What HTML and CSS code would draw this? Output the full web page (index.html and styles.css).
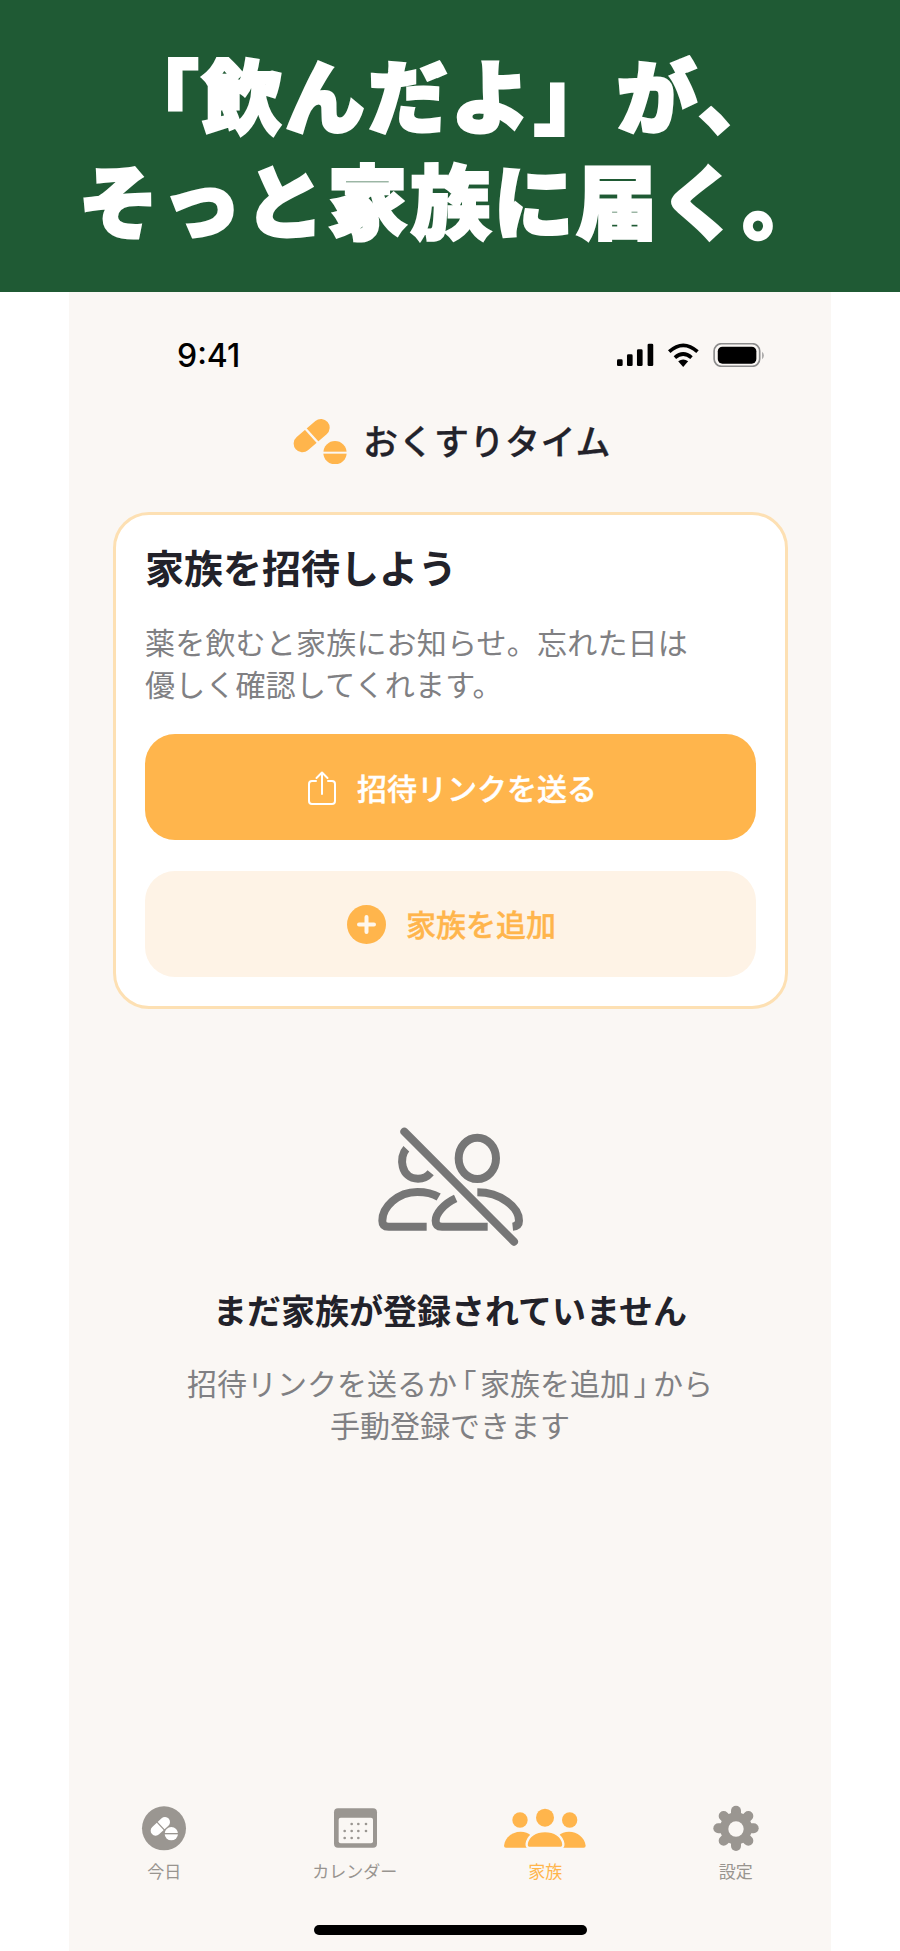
FILE: index.html
```html
<!DOCTYPE html>
<html lang="ja">

<head>
    <title>おくすりタイム</title>
    <link rel="stylesheet" href="styles.css">
</head>

<body>
    <header class="banner">
        <p class="banner-line">「飲んだよ」が、</p>
        <p class="banner-line banner-line-second">そっと家族に届く。</p>
    </header>

    <main class="phone">
        <div class="status-bar">
            <span class="status-time">9:41</span>
            <svg class="status-icons" viewBox="48 36 445 72">
                <rect x="48" y="85" width="17" height="20" rx="4" fill="#000" />
                <rect x="78" y="70" width="17" height="35" rx="4" fill="#000" />
                <rect x="108" y="55" width="17" height="50" rx="4" fill="#000" />
                <rect x="140" y="38" width="17" height="67" rx="4" fill="#000" />
                <path d="M205 62 Q247 24 290 62" fill="none" stroke="#000" stroke-width="11" />
                <path d="M222 80 Q247 58 272 80" fill="none" stroke="#000" stroke-width="11" />
                <path d="M232 91 Q247 80 262 91 L247 108 Z" fill="#000" />
                <rect x="340" y="38" width="137" height="68" rx="22" fill="none" stroke="#8c8c8c" stroke-width="5" />
                <rect x="351" y="47" width="116" height="51" rx="14" fill="#000" />
                <path d="M485 62 Q493 73 485 85 Z" fill="#8c8c8c" />
            </svg>
        </div>

        <div class="app-header">
            <svg class="app-logo" viewBox="38 52 162 138">
                <path d="M66 129 L122 81" fill="none" stroke="#ffb54c" stroke-width="52" stroke-linecap="round" />
                <path d="M68 76 L120 134" fill="none" stroke="#faf7f4" stroke-width="7" />
                <circle cx="164" cy="156" r="35" fill="#ffb54c" />
                <rect x="125" y="153" width="78" height="6" fill="#faf7f4" />
            </svg>
            <h1 class="app-title">おくすりタイム</h1>
        </div>

        <section class="invite-card">
            <h2 class="invite-title">家族を招待しよう</h2>
            <p class="invite-text">薬を飲むと家族にお知らせ。忘れた日は<br>優しく確認してくれます。</p>
            <button class="btn btn-primary">
                <svg class="share-icon" viewBox="0 0 28 34">
                    <path d="M8 10 H4 Q1 10 1 13 V30 Q1 33 4 33 H24 Q27 33 27 30 V13 Q27 10 24 10 H20" fill="none" stroke="#fff" stroke-width="2" stroke-linecap="round" />
                    <path d="M14 23 V1.500 M8.500 7 L14 1.500 L19.500 7" fill="none" stroke="#fff" stroke-width="2" stroke-linecap="round" stroke-linejoin="round" />
                </svg>
                <span class="btn-label">招待リンクを送る</span>
            </button>
            <button class="btn btn-secondary">
                <svg class="plus-icon" viewBox="0 0 39 39">
                    <circle cx="19.500" cy="19.500" r="19.500" fill="#ffb54c" />
                    <path d="M12 19.500 H27 M19.500 12 V27" fill="none" stroke="#fff7ec" stroke-width="4" stroke-linecap="round" />
                </svg>
                <span class="btn-label">家族を追加</span>
            </button>
        </section>

        <section class="empty-state">
            <svg class="empty-icon" viewBox="0 0 660 480">
                <g fill="none" stroke="#767676" stroke-width="24">
                    <path d="M193 95 L522 425" stroke-linecap="round" />
                    <ellipse cx="412" cy="175" rx="56" ry="62" />
                    <path d="M199 146 C176 170 182 236 234 236 C250 236 263 229 272 218" />
                    <path d="M296 291 C276 279 254 276 232 276 C172 276 127 322 127 362 Q127 380 146 380 L260 380" />
                    <path d="M347 295 C310 312 287 342 287 362 Q287 380 306 380 L443 380" />
                    <path d="M412 277 C482 277 537 322 537 362 Q537 378 518 380" />
                </g>
            </svg>
            <h3 class="empty-title">まだ家族が登録されていません</h3>
            <p class="empty-text">招待リンクを送るか<span class="bracket">「</span>家族を追加<span class="bracket">」</span>から<br>手動登録できます</p>
        </section>

        <nav class="tab-bar">
            <div class="tab">
                <svg class="tab-icon" viewBox="148 69 270 150">
                    <circle cx="283" cy="145" r="66" fill="#9a9691" />
                    <path d="M258 152 L286 126" fill="none" stroke="#fff" stroke-width="30" stroke-linecap="round" />
                    <path d="M258 122 L288 154" fill="none" stroke="#9a9691" stroke-width="4" />
                    <circle cx="305" cy="161" r="20" fill="#fff" />
                    <rect x="283" y="159" width="44" height="4" fill="#9a9691" />
                </svg>
                <span class="tab-label">今日</span>
            </div>
            <div class="tab">
                <svg class="tab-icon" viewBox="717 69 270 150">
                    <rect x="789" y="85" width="129" height="118" rx="12" fill="#9a9691" />
                    <rect x="803" y="113" width="103" height="77" rx="6" fill="#faf7f4" />
                    <g fill="#9a9691">
                        <circle cx="842" cy="132" r="4" />
                        <circle cx="862" cy="132" r="4" />
                        <circle cx="885" cy="132" r="4" />
                        <circle cx="821" cy="153" r="4" />
                        <circle cx="842" cy="153" r="4" />
                        <circle cx="862" cy="153" r="4" />
                        <circle cx="885" cy="153" r="4" />
                        <circle cx="821" cy="174" r="4" />
                        <circle cx="842" cy="174" r="4" />
                        <circle cx="862" cy="174" r="4" />
                    </g>
                </svg>
                <span class="tab-label">カレンダー</span>
            </div>
            <div class="tab tab-active">
                <svg class="tab-icon" viewBox="93 69 270 150">
                    <g fill="#ffb54c">
                        <circle cx="153" cy="120" r="23" />
                        <circle cx="228" cy="113" r="27" />
                        <circle cx="302" cy="120" r="23" />
                        <path d="M105 197 C108 172 130 155 155 155 C180 155 200 172 200 203 H111 Q105 203 105 197 Z" />
                        <path d="M350 197 C347 172 325 155 300 155 C275 155 255 172 255 203 H344 Q350 203 350 197 Z" />
                    </g>
                    <path d="M173 192 C176 168 200 153 228 153 C256 153 280 168 283 192 Q284 204 272 204 H184 Q172 204 173 192 Z" fill="#ffb54c" stroke="#faf7f4" stroke-width="7" />
                </svg>
                <span class="tab-label">家族</span>
            </div>
            <div class="tab">
                <svg class="tab-icon" viewBox="662 69 270 150">
                    <g stroke="#9a9691" stroke-width="30" stroke-linecap="round">
                        <path d="M797 92 V198" />
                        <path d="M744 145 H850" />
                        <path d="M760 108 L834 182" />
                        <path d="M834 108 L760 182" />
                    </g>
                    <circle cx="797" cy="145" r="48" fill="#9a9691" />
                    <circle cx="797" cy="147" r="23" fill="#faf7f4" />
                </svg>
                <span class="tab-label">設定</span>
            </div>
        </nav>
        <div class="home-bar"></div>
    </main>
</body>

</html>
```

FILE: styles.css
```css
* {
    box-sizing: border-box;
}

body {
    margin: 0;
    height: 1951px;
    display: flex;
    flex-direction: column;
    background-color: #fff;
    font-family: "Noto Sans CJK JP", "Noto Sans", sans-serif;
    color: #22222a;
}

/* Green caption banner */
.banner {
    height: 292px;
    padding-top: 40px;
    background-color: #1f5a34;
    color: #fff;
    text-align: center;
}

.banner-line {
    margin: 0;
    font-size: 80px;
    line-height: 105px;
    letter-spacing: 3px;
    font-weight: 900;
    -webkit-text-stroke: 3px #fff;
    white-space: nowrap;
}

.banner-line-second {
    padding-left: 4px;
}

/* Phone screen */
.phone {
    flex: 1;
    width: 762px;
    margin: 0 auto;
    display: flex;
    flex-direction: column;
    background-color: #faf7f4;
}

.status-bar {
    display: flex;
    justify-content: space-between;
    align-items: center;
    height: 36px;
    margin-top: 45px;
    padding: 0 66px 0 108px;
}

.status-time {
    font-family: "Inter", "Liberation Sans", sans-serif;
    font-size: 32px;
    font-weight: 500;
    color: #000;
}

.status-icons {
    width: 148px;
    height: 24px;
}

.app-header {
    display: flex;
    justify-content: center;
    align-items: center;
    gap: 16px;
    height: 54px;
    margin-top: 41px;
    margin-bottom: 44px;
    padding-left: 4px;
}

.app-logo {
    width: 54px;
    height: 46px;
}

.app-title {
    margin: 0 0 2px;
    font-size: 35px;
    font-weight: 500;
    line-height: 52px;
    letter-spacing: 0.5px;
    -webkit-text-stroke: 0.3px #22222a;
}

.invite-card {
    display: flex;
    flex-direction: column;
    margin: 0 43px 0 44px;
    padding: 29px 29px 29px;
    border: 3px solid #fde0b3;
    border-radius: 36px;
    background-color: #fff;
}

.invite-title {
    margin: 0 0 32px;
    font-size: 39px;
    font-weight: 700;
    line-height: 44px;
}

.invite-text {
    margin: 0 0 30px;
    font-size: 30px;
    line-height: 42px;
    letter-spacing: 0.2px;
    color: #808083;
    white-space: nowrap;
}

.btn {
    display: flex;
    justify-content: center;
    align-items: center;
    height: 106px;
    border: none;
    border-radius: 30px;
    font-family: inherit;
    font-size: 30px;
    font-weight: 500;
    -webkit-text-stroke: 0.4px currentColor;
}

.btn-label {
    margin-bottom: 3px;
}

.btn-primary {
    gap: 21px;
    margin-bottom: 31px;
    padding: 2px 0 0 4px;
    background-color: #ffb54c;
    color: #fff;
}

.btn-secondary {
    gap: 20px;
    padding-left: 8px;
    background-color: #fef3e6;
    color: #ffb54c;
}

.share-icon {
    width: 28px;
    height: 34px;
}

.plus-icon {
    width: 39px;
    height: 39px;
}

.empty-state {
    display: flex;
    flex-direction: column;
    align-items: center;
    margin-top: 91px;
}

.empty-icon {
    width: 220px;
    height: 160px;
    margin-bottom: 28px;
}

.empty-title {
    margin: 0 0 29px;
    font-size: 34px;
    font-weight: 700;
    line-height: 44px;
}

.empty-text {
    margin: 0;
    font-size: 30px;
    line-height: 42px;
    color: #808083;
    text-align: center;
}

.bracket {
    margin: 0 4px;
    font-feature-settings: "palt";
}

/* Bottom tabs */
.tab-bar {
    display: grid;
    grid-template-columns: repeat(4, 1fr);
    margin-top: auto;
}

.tab {
    display: flex;
    flex-direction: column;
    align-items: center;
    gap: 6px;
    color: #98948f;
}

.tab-active {
    color: #ffb54c;
}

.tab-icon {
    width: 90px;
    height: 50px;
}

.tab-label {
    font-size: 17px;
    line-height: 24px;
}

.home-bar {
    align-self: center;
    width: 273px;
    height: 10px;
    margin: 42px 0 16px;
    border-radius: 5px;
    background-color: #000;
}
```
